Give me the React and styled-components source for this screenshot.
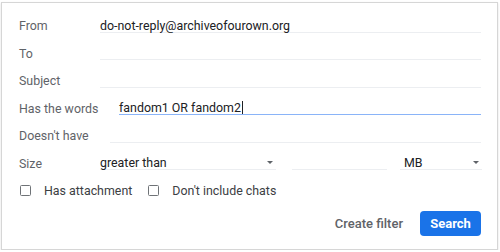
import React from 'react'
import styled, { createGlobalStyle } from 'styled-components'

const Global = createGlobalStyle`
	body {
		margin: 0;
		background: #ffffff;
		font-family: Roboto, 'Liberation Sans', Arial, sans-serif;
	}
`

const Panel = styled('div')`
	box-sizing: border-box;
	margin: 2px 0 0 1px;
	width: 497px;
	height: 248px;
	border: 1px solid #d6d6d6;
	box-shadow: 0 1px 2px rgba(0, 0, 0, 0.12);
	padding: 9px 16px 0 16px;
	background: #ffffff;
`

const Row = styled('div')`
	display: flex;
	align-items: center;
	height: 27.5px;
`

const Label = styled('div')`
	width: ${(p) => p.$width || 82}px;
	flex: none;
	font-size: 12.4px;
	color: #5f6368;
	padding-left: 1px;
	box-sizing: border-box;
`

const Field = styled('div')`
	flex: ${(p) => (p.$width ? 'none' : '1')};
	width: ${(p) => (p.$width ? `${p.$width}px` : 'auto')};
	margin-left: ${(p) => p.$gap || 0}px;
	height: 13px;
	line-height: 13px;
	font-size: 12.4px;
	color: #202124;
	border-bottom: 1px solid ${(p) => (p.$active ? '#8ab4f8' : '#eceef1')};
	display: flex;
	align-items: center;
	justify-content: space-between;
	white-space: nowrap;
`

const Caret = styled('span')`
	display: inline-block;
	width: 1px;
	height: 13px;
	background: #202124;
	margin-left: 1px;
	vertical-align: -2px;
`

const Arrow = styled('span')`
	width: 0;
	height: 0;
	border-left: 3.5px solid transparent;
	border-right: 3.5px solid transparent;
	border-top: 3.5px solid #5f6368;
	margin-right: 3px;
`

const CheckRow = styled(Row)`
	padding-left: 2px;
`

const Check = styled('label')`
	display: flex;
	align-items: center;
	font-size: 12.4px;
	color: #3c4043;
	margin-right: ${(p) => p.$gap || 0}px;
`

const Box = styled('span')`
	box-sizing: border-box;
	width: 11px;
	height: 11px;
	border: 1.5px solid #6f7377;
	border-radius: 1.5px;
	margin-right: 13px;
`

const Actions = styled('div')`
	display: flex;
	justify-content: flex-end;
	align-items: center;
	gap: 17px;
	margin-top: 6px;
`

const TextButton = styled('button')`
	border: none;
	background: none;
	padding: 0;
	font-family: Roboto, 'Liberation Sans', Arial, sans-serif;
	font-size: 13px;
	font-weight: 500;
	color: #5f6368;
`

const PrimaryButton = styled('button')`
	border: none;
	background: #1a73e8;
	color: #ffffff;
	border-radius: 4px;
	width: 61px;
	height: 25px;
	font-family: Roboto, 'Liberation Sans', Arial, sans-serif;
	font-size: 13px;
	font-weight: 700;
	padding: 0;
`

export default function App() {
	return (
		<>
			<Global />
			<Panel>
				<Row>
					<Label>From</Label>
					<Field>do-not-reply@archiveofourown.org</Field>
				</Row>
				<Row>
					<Label>To</Label>
					<Field />
				</Row>
				<Row>
					<Label>Subject</Label>
					<Field />
				</Row>
				<Row>
					<Label $width={101}>Has the words</Label>
					<Field $active>
						<span>
							fandom1 OR fandom2
							<Caret />
						</span>
					</Field>
				</Row>
				<Row>
					<Label $width={92}>Doesn't have</Label>
					<Field />
				</Row>
				<Row>
					<Label>Size</Label>
					<Field $width={176}>
						greater than
						<Arrow />
					</Field>
					<Field $width={95} $gap={16} />
					<Field $width={82} $gap={13}>
						<span style={{ paddingLeft: 4 }}>MB</span>
						<Arrow />
					</Field>
				</Row>
				<CheckRow>
					<Check $gap={16}>
						<Box />
						Has attachment
					</Check>
					<Check>
						<Box />
						Don't include chats
					</Check>
				</CheckRow>
				<Actions>
					<TextButton>Create filter</TextButton>
					<PrimaryButton>Search</PrimaryButton>
				</Actions>
			</Panel>
		</>
	)
}
